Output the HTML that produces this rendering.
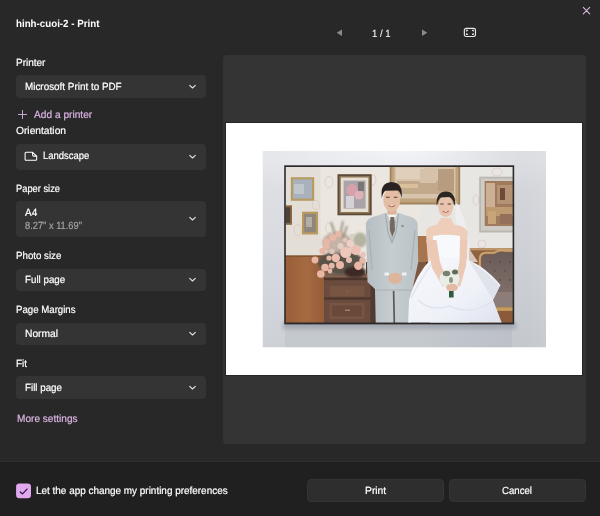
<!DOCTYPE html>
<html><head><meta charset="utf-8"><title>Print</title>
<style>
*{box-sizing:border-box;margin:0;padding:0}
html,body{width:600px;height:516px;overflow:hidden;background:#282828}
body{font-family:"Liberation Sans",sans-serif;font-size:10px;color:#fff;position:relative}
.abs{position:absolute}
.t{position:absolute;white-space:nowrap;line-height:12px;font-size:10.4px;text-rendering:geometricPrecision;-webkit-text-stroke:0.2px currentColor;transform-origin:0 50%;display:inline-block}
.sel{position:absolute;left:16px;width:190px;background:#343434;border-radius:4px}
.preview{left:223px;top:55px;width:363px;height:389px;background:#343434;border-radius:4px}
.page{left:226.4px;top:123.1px;width:355.6px;height:252.1px;background:#fff;box-shadow:0 0 0 0.9px #252525}
.footer{left:0;top:461px;width:600px;height:55px;background:#202020;border-top:1px solid #2f2f2f}
.btn{top:479px;height:23px;background:#2e2e2e;border-radius:4px;border:1px solid #343434}
.cb{left:16.1px;top:483.3px;width:15px;height:15px;border-radius:3.3px;background:#e0a9ee}
.chev{position:absolute;left:187.5px}
</style></head><body>
<svg class="abs" style="left:582px;top:6px" width="9" height="9" viewBox="0 0 9 9"><path d="M1.3 1.4L7.7 7.8M7.7 1.4L1.3 7.8" stroke="#dcb8e5" stroke-width="1.1" fill="none" stroke-linecap="round"/></svg>

<svg class="abs" style="left:336px;top:29px" width="7" height="8" viewBox="0 0 7 8"><path d="M6 0.5L0.7 3.7L6 6.9Z" fill="#8a8a8a"/></svg>
<svg class="abs" style="left:421px;top:29px" width="7" height="8" viewBox="0 0 7 8"><path d="M1 0.5L6.3 3.7L1 6.9Z" fill="#8a8a8a"/></svg>
<svg class="abs" style="left:463px;top:27px" width="14" height="11" viewBox="0 0 14 11"><rect x="1.35" y="1.35" width="11.1" height="8.1" rx="1.7" fill="none" stroke="#e8e8e8" stroke-width="1.15"/><path d="M3.5 4.6V3.4H5M9 3.4H10.3V4.6M10.3 6.2V7.4H9M5 7.4H3.5V6.2" stroke="#dcdcdc" stroke-width="1.1" fill="none"/></svg>


<div class="sel" style="top:75.4px;height:22.2px"></div>
<div class="sel" style="top:143.5px;height:26.5px"></div>
<div class="sel" style="top:200.8px;height:35.8px"></div>
<div class="sel" style="top:268.6px;height:22.6px"></div>
<div class="sel" style="top:322.6px;height:22.6px"></div>
<div class="sel" style="top:376.0px;height:22.8px"></div>
<svg class="chev" style="top:83.9px" width="9" height="6" viewBox="0 0 9 6"><path d="M1.7 1.3L4.5 4L7.3 1.3" stroke="#e0e0e0" stroke-width="1.15" fill="none" stroke-linecap="round" stroke-linejoin="round"/></svg>
<svg class="chev" style="top:154.2px" width="9" height="6" viewBox="0 0 9 6"><path d="M1.7 1.3L4.5 4L7.3 1.3" stroke="#e0e0e0" stroke-width="1.15" fill="none" stroke-linecap="round" stroke-linejoin="round"/></svg>
<svg class="chev" style="top:216.1px" width="9" height="6" viewBox="0 0 9 6"><path d="M1.7 1.3L4.5 4L7.3 1.3" stroke="#e0e0e0" stroke-width="1.15" fill="none" stroke-linecap="round" stroke-linejoin="round"/></svg>
<svg class="chev" style="top:277.4px" width="9" height="6" viewBox="0 0 9 6"><path d="M1.7 1.3L4.5 4L7.3 1.3" stroke="#e0e0e0" stroke-width="1.15" fill="none" stroke-linecap="round" stroke-linejoin="round"/></svg>
<svg class="chev" style="top:331.4px" width="9" height="6" viewBox="0 0 9 6"><path d="M1.7 1.3L4.5 4L7.3 1.3" stroke="#e0e0e0" stroke-width="1.15" fill="none" stroke-linecap="round" stroke-linejoin="round"/></svg>
<svg class="chev" style="top:384.9px" width="9" height="6" viewBox="0 0 9 6"><path d="M1.7 1.3L4.5 4L7.3 1.3" stroke="#e0e0e0" stroke-width="1.15" fill="none" stroke-linecap="round" stroke-linejoin="round"/></svg>
<svg class="abs" style="left:17px;top:109px" width="11" height="11" viewBox="0 0 11 11"><path d="M5.5 1V10M1 5.5H10" stroke="#d9b3e3" stroke-width="0.9" fill="none"/></svg>
<svg class="abs" style="left:24px;top:151px" width="14" height="11" viewBox="0 0 14 11"><path d="M2.2 1.3H8.6L12.7 5.2V8.2Q12.7 9.3 11.6 9.3H2.2Q1.1 9.3 1.1 8.2V2.4Q1.1 1.3 2.2 1.3ZM8.6 1.5V4Q8.6 5.1 9.7 5.1H12.5" stroke="#fff" stroke-width="1.05" fill="none" stroke-linejoin="round"/></svg>

<div class="abs preview"></div>
<div class="abs page"></div>
<svg class="abs" style="left:0;top:0" width="600" height="516" viewBox="0 0 600 516">
<defs>
<linearGradient id="wall" x1="0" y1="0" x2="0" y2="1"><stop offset="0" stop-color="#e0e2e6"/><stop offset="0.45" stop-color="#d9dbe0"/><stop offset="1" stop-color="#cdd1d6"/></linearGradient>
<radialGradient id="wallglow" cx="0.5" cy="0" r="0.7"><stop offset="0" stop-color="#f4f5f8" stop-opacity="0.9"/><stop offset="1" stop-color="#f3f4f7" stop-opacity="0"/></radialGradient>
<linearGradient id="wallr" x1="0" y1="0" x2="1" y2="0"><stop offset="0.55" stop-color="#5a6068" stop-opacity="0"/><stop offset="0.92" stop-color="#5a6068" stop-opacity="0.08"/><stop offset="1" stop-color="#5a6068" stop-opacity="0.05"/></linearGradient>
<linearGradient id="wood" x1="0" y1="0" x2="1" y2="0"><stop offset="0" stop-color="#985e39"/><stop offset="0.5" stop-color="#a56a41"/><stop offset="1" stop-color="#915936"/></linearGradient>
<linearGradient id="skirt" x1="0" y1="0" x2="1" y2="1"><stop offset="0" stop-color="#f7f8fc"/><stop offset="0.6" stop-color="#eff1f8"/><stop offset="1" stop-color="#dde1ed"/></linearGradient>
<linearGradient id="suit" x1="0" y1="0" x2="1" y2="0"><stop offset="0" stop-color="#b5bec3"/><stop offset="0.5" stop-color="#c5cdd0"/><stop offset="1" stop-color="#bac3c7"/></linearGradient>
<linearGradient id="sofa" x1="0" y1="0" x2="0" y2="1"><stop offset="0" stop-color="#6b5b57"/><stop offset="1" stop-color="#857570"/></linearGradient>
<filter id="b1" x="-5%" y="-5%" width="110%" height="110%"><feGaussianBlur stdDeviation="0.55"/></filter>
<filter id="b2" x="-20%" y="-20%" width="140%" height="140%"><feGaussianBlur stdDeviation="1.3"/></filter>
<filter id="b3" x="-20%" y="-50%" width="140%" height="200%"><feGaussianBlur stdDeviation="2.2"/></filter>
<clipPath id="inframe"><rect x="285.8" y="167" width="226.8" height="155.4"/></clipPath>
<clipPath id="inphoto"><rect x="262.5" y="151" width="283.5" height="196.5"/></clipPath>
</defs>
<g clip-path="url(#inphoto)">
<rect x="262.5" y="151" width="283.5" height="196.5" fill="url(#wall)"/>
<rect x="262.5" y="151" width="283.5" height="70" fill="url(#wallglow)"/>
<rect x="262.5" y="151" width="283.5" height="196.5" fill="url(#wallr)"/>
<rect x="285" y="324" width="227" height="24" fill="#4b5264" opacity="0.07"/>
<rect x="283" y="322" width="233" height="7" fill="#a3a7b0" filter="url(#b3)"/>
</g>
<rect x="284.2" y="165.3" width="230" height="159.1" fill="#2b2a2b"/>
<g clip-path="url(#inframe)">
<g filter="url(#b1)">
<!-- wallpaper -->
<rect x="284" y="166" width="232" height="160" fill="#ebe7e0"/>
<rect x="284" y="166" width="36.5" height="92" fill="#e4dfd6"/>
<rect x="420" y="166" width="96" height="90" fill="#e7e6e3"/>
<!-- wall ornaments -->
<g fill="none" stroke="#dcc9c2" stroke-width="0.8">
<ellipse cx="329" cy="182" rx="4" ry="5.5"/><ellipse cx="316" cy="205" rx="3.5" ry="4.5"/><ellipse cx="298" cy="230" rx="4" ry="5.5"/><ellipse cx="329" cy="228" rx="3.5" ry="5"/>
<ellipse cx="373" cy="180" rx="3" ry="5"/><ellipse cx="476" cy="200" rx="3" ry="5"/><ellipse cx="497" cy="172" rx="5" ry="4"/><ellipse cx="482" cy="244" rx="4" ry="4"/>
</g>
<!-- wainscot -->
<rect x="284" y="256" width="45" height="70" fill="url(#wood)"/>
<rect x="284" y="255.3" width="45" height="1.6" fill="#80502f"/>
<!-- wood behind couple -->
<rect x="408" y="236" width="22" height="28" fill="#a7754e"/>
<rect x="366" y="262" width="64" height="64" fill="#4f3a30"/>
<rect x="410" y="262" width="16" height="30" fill="#7b5843"/>
<!-- picture 1 -->
<rect x="290.8" y="177.2" width="23.4" height="23.6" fill="#b79b64"/>
<rect x="293" y="179.4" width="19" height="19.2" fill="#a9b2bc"/>
<rect x="294" y="184" width="10" height="10" fill="#bfc6cc"/>
<!-- picture 4 -->
<rect x="285.5" y="205.3" width="6.5" height="19.5" fill="#8a6a45"/>
<rect x="285.5" y="207.3" width="4.7" height="15.5" fill="#4f4239"/>
<!-- picture 3 -->
<rect x="302" y="211.7" width="16" height="22.8" fill="#b99a5d"/>
<rect x="304.2" y="213.9" width="11.6" height="18.4" fill="#8f877e"/>
<rect x="306" y="217" width="6" height="10" fill="#b5aea4"/>
<!-- picture 2 -->
<rect x="337.5" y="174.2" width="34.2" height="41.1" fill="#5d4b38"/>
<rect x="339.3" y="176" width="30.6" height="37.5" fill="#8b7454"/>
<rect x="340.8" y="177.5" width="27.6" height="34.5" fill="#e6dfd3"/>
<rect x="343.6" y="180.6" width="22" height="28" fill="#aaa4a8"/>
<ellipse cx="352" cy="190" rx="5.5" ry="6" fill="#d8a0ab"/>
<ellipse cx="359" cy="195" rx="4.5" ry="4.5" fill="#e0b0b8"/>
<rect x="346" y="196" width="8" height="12" fill="#d4d2d4"/>
<rect x="358" y="182" width="6" height="9" fill="#7b7478"/>
<!-- big painting -->
<rect x="389.7" y="166" width="70.5" height="38.5" fill="#a2845d"/>
<rect x="391.5" y="166" width="67" height="36.5" fill="#bfa37c"/>
<rect x="394.5" y="166" width="61" height="32.5" fill="#d6c4ad"/>
<rect x="396" y="168" width="28" height="11" fill="#e0cfba"/>
<rect x="397" y="181" width="57" height="13" fill="#c2a98c"/>
<rect x="420" y="169" width="16" height="14" fill="#d6c2aa"/>
<rect x="438" y="169" width="16" height="22" fill="#b89c80"/>
<rect x="400" y="184" width="18" height="4" fill="#d9bf9a"/>
<!-- right painting -->
<rect x="479.2" y="176.7" width="36" height="55.8" fill="#bbb7b0"/>
<rect x="481" y="178.5" width="34" height="52" fill="#cfccc6"/>
<rect x="484.7" y="181" width="30" height="45" fill="#a07a5c"/>
<rect x="486" y="183" width="9" height="24" fill="#ccb096"/>
<rect x="497" y="185" width="16" height="19" fill="#b59273"/>
<rect x="500" y="188" width="5" height="12" fill="#6e4c38"/>
<rect x="486" y="207" width="27" height="9" fill="#bf9a70"/>
<rect x="488" y="211" width="8" height="13" fill="#c9a478"/>
<rect x="500" y="214" width="12" height="10" fill="#94705a"/>
<!-- sofa -->
<rect x="469" y="248.3" width="47" height="80" fill="#8f6240"/>
<rect x="469" y="248.3" width="47" height="2" fill="#c09767"/>
<path d="M481.5 259 Q481.5 254.5 486 254.5 L494 254.5 Q500 250.5 506 252.5 L516 252.5 L516 307 L481.5 307Z" fill="url(#sofa)"/>
<path d="M479.8 307 L479.8 259 Q479.8 253 486 252.8 L494 252.8 Q500 248.8 506 250.8 L516 250.8" stroke="#c8a672" stroke-width="2" fill="none"/>
<g fill="#5b4d4a"><circle cx="490" cy="262" r="0.9"/><circle cx="500" cy="262" r="0.9"/><circle cx="510" cy="262" r="0.9"/><circle cx="495" cy="271" r="0.9"/><circle cx="505" cy="271" r="0.9"/><circle cx="500" cy="280" r="0.9"/><circle cx="510" cy="280" r="0.9"/></g>
<rect x="481" y="292" width="35" height="15" fill="#8c7d78"/>
<rect x="476" y="307.3" width="40" height="3.6" fill="#c39c5e"/>
<rect x="476" y="311" width="40" height="15" fill="#8a5a3a"/>
<!-- cabinet -->
<rect x="324" y="274" width="46.5" height="52" fill="#6a4b3d"/>
<rect x="323" y="273.5" width="48" height="4.2" fill="#86655320"/>
<rect x="323" y="273.5" width="48" height="4.2" fill="#846352"/>
<rect x="324" y="277.7" width="46.5" height="2.5" fill="#4d352b"/>
<rect x="329.5" y="286" width="35" height="10.5" fill="#775543"/>
<rect x="324" y="297.3" width="46.5" height="2.4" fill="#4f372c"/>
<rect x="329.5" y="303" width="35" height="16" fill="#775543"/>
<rect x="332" y="305.5" width="30" height="11" fill="#6a4a3b"/>
<rect x="345" y="309.5" width="5" height="1.5" fill="#a08063"/>
<rect x="346" y="290" width="2" height="2" fill="#8d5a4a"/>
</g>
<!-- flowers -->
<g filter="url(#b2)">
<ellipse cx="341" cy="263" rx="23" ry="12" fill="#5a5246"/>
<ellipse cx="337" cy="243" rx="15" ry="11" fill="#b9a597" opacity="0.8"/>
<ellipse cx="355" cy="272" rx="11" ry="5.5" fill="#3e2c27"/>
<ellipse cx="360" cy="240" rx="7" ry="7.5" fill="#b4b3a0"/>
<path d="M331 222 L336 236 M343 221 L340 236 M347 226 L343 238" stroke="#8d8673" stroke-width="1.6" fill="none"/>
</g>
<g filter="url(#b1)" fill="#e8b7a6">
<circle cx="333" cy="237.5" r="3.6"/><circle cx="338.5" cy="234" r="3.2"/><circle cx="326.7" cy="241.7" r="3.2"/><circle cx="350" cy="243.5" r="3.4" fill="#efd0c6"/>
<circle cx="326.5" cy="246.5" r="3.2"/><circle cx="322.5" cy="251" r="3.2"/><circle cx="345.8" cy="252.5" r="5.6" fill="#eec6ba"/>
<circle cx="355.8" cy="250" r="5" fill="#ebc0b3"/><circle cx="335.8" cy="258" r="4.2" fill="#ebbfae"/><circle cx="315" cy="260" r="3.4"/>
<circle cx="325" cy="267.5" r="3.8"/><circle cx="331.7" cy="265.8" r="3"/><circle cx="340" cy="265" r="4"/><circle cx="358.3" cy="265.8" r="4.2"/>
<circle cx="362.5" cy="260.5" r="3.2"/><circle cx="320.8" cy="274" r="3.8"/><circle cx="330" cy="271" r="2.4"/><circle cx="363" cy="254.5" r="2.8" fill="#e7c3b8"/>
<circle cx="340.5" cy="246" r="3" fill="#e3cfc6"/><circle cx="332" cy="251.5" r="2.8" fill="#dcc5bb"/><circle cx="349" cy="260" r="3" fill="#e6bfb2"/><circle cx="329" cy="258" r="2.6"/>
<circle cx="352" cy="236" r="2.4" fill="#d9cfc0"/><circle cx="345" cy="240" r="2.2" fill="#e6c4b9"/>
</g>
<!-- groom -->
<g filter="url(#b1)">
<path d="M365.8 223 Q367 217.5 378 215.5 L386 212.5 L398 212.5 L406 215.5 Q416.5 217.5 417.6 223 L418.2 262 L412.5 289 L411 326 L375.8 326 L375 289 L367.5 282 Z" fill="url(#suit)"/>
<path d="M375.5 290 L412 290" stroke="#abb0b4" stroke-width="1" fill="none"/>
<path d="M393.6 291 L394.4 326" stroke="#5d5855" stroke-width="1.7" fill="none"/>
<path d="M386.5 212.5 L392 224 L397.5 212.5Z" fill="#f3f3f3"/>
<path d="M388.5 221 L392 241 L396 221Z" fill="#adb2b6"/>
<path d="M390.4 217 L394.2 217 L395 230 L392.4 236.5 L389.8 230Z" fill="#75675f"/>
<path d="M385.5 214 L388 232 L392 243 M398.5 214 L396 232 L392 243" stroke="#a2a7ab" stroke-width="1.1" fill="none"/>
<path d="M369 230 L372 270 M415 230 L411 270" stroke="#abb0b4" stroke-width="1.2" fill="none"/>
<rect x="387.5" y="208" width="9" height="6.5" fill="#dcb29a"/>
<ellipse cx="391.7" cy="200" rx="8.5" ry="11.8" fill="#e4bda5"/>
<path d="M381.8 198 Q379.6 182.6 391.5 182 Q403.4 182.6 401.6 198 Q400.6 192 398 190.4 L385.5 190.8 Q383 192 381.8 198Z" fill="#2a2422"/>
<path d="M386 197.3 h3.6 M393.8 197.3 h3.6" stroke="#4b3a33" stroke-width="1.1"/>
<path d="M388.3 205.6 Q391.7 208 395.1 205.6" stroke="#a8604f" stroke-width="1" fill="#f4ece8"/>
<ellipse cx="395" cy="278.3" rx="7" ry="5.6" fill="#ddb49c"/>
<rect x="384.5" y="272.5" width="4.5" height="3" fill="#f0f0f0"/><rect x="402" y="272.5" width="4.5" height="3" fill="#f0f0f0"/>
<circle cx="402.5" cy="226" r="1.2" fill="#8b8b7e"/>
</g>
<!-- bride -->
<g filter="url(#b1)">
<path d="M455 200 Q466 215 470 250 L478 262 L462 262 L456 225Z" fill="#f2f2f3" opacity="0.7"/>
<path d="M425.8 231 Q428 225.5 437 224.8 L441 218 L450.5 218 L454 224.8 Q465 225.5 467.6 232 L467 262 L460 286 L438 286 L428 262Z" fill="#eecdbb"/>
<path d="M433 236 Q446.5 233.3 460 236 L461 262 L432 262Z" fill="#f8f9fc"/>
<path d="M432 258 L461 258 Q481 262 500.5 285 L493 300 L503 326 L408 326 L409 300 Q415 275 432 258Z" fill="url(#skirt)"/>
<path d="M469 261 Q490 274 499.5 286 L492.5 300 Q484 284 469 261Z" fill="#e1e3ea"/>
<path d="M418 300 Q430 312 450 306 Q470 316 492 302" stroke="#dfe3ee" stroke-width="1.4" fill="none"/>
<path d="M411 298 Q420 280 433 262" stroke="#e3e6ef" stroke-width="1.5" fill="none"/>
<path d="M426.2 240 L436.5 240 L440 262 L448 283 L443 287 L432 268Z" fill="#ecc9b5"/>
<path d="M467.4 240 L460 240 L459.5 262 L455 283 L460 287 L466 266Z" fill="#ecc9b5"/>
<ellipse cx="445.7" cy="206.3" rx="7.5" ry="10.8" fill="#e8c3ae"/>
<path d="M436.8 206 Q435.3 192 446 191.5 Q456.3 192 455 206 Q453 198 449 197 L441 197.4 Q438 199.5 436.8 206Z" fill="#2b2523"/>
<path d="M440.3 204 h3.3 M447.6 204 h3.3" stroke="#4b3a33" stroke-width="1"/>
<path d="M442.6 211.3 Q445.7 213.6 448.8 211.3" stroke="#b05f58" stroke-width="1" fill="#f4ece8"/>
<ellipse cx="449.5" cy="278.5" rx="10" ry="9.2" fill="#e9ede6"/>
<ellipse cx="446.5" cy="273.5" rx="3.8" ry="2.8" fill="#75826f"/><ellipse cx="455" cy="272" rx="3" ry="2.5" fill="#5e6c58"/><ellipse cx="451" cy="280" rx="2" ry="3" fill="#8b9784"/>
<ellipse cx="452" cy="287.5" rx="6" ry="3.8" fill="#e3baa5"/>
<rect x="449" y="291" width="4.6" height="6.5" fill="#2f5a40"/>
</g>
</g>
</svg>


<div class="abs footer"></div>
<svg class="abs" style="left:15px;top:482px" width="18" height="18" viewBox="0 0 18 18"><rect x="1.1" y="1.6" width="14.9" height="14.7" rx="3.3" fill="#e0a9ee"/><path d="M5.3 9.9L7.5 11.9L12 7.1" stroke="#351a40" stroke-width="1.35" fill="none" stroke-linecap="round" stroke-linejoin="round"/></svg>
<div class="abs btn" style="left:306.5px;width:137px"></div>
<div class="abs btn" style="left:449px;width:137px"></div>
<span class="t" style="left:16.2px;top:18.90px;transform:scaleX(0.938);font-weight:bold;-webkit-text-stroke:0;">hinh-cuoi-2 - Print</span>
<span class="t" style="left:16.2px;top:57.50px;transform:scaleX(0.960);">Printer</span>
<span class="t" style="left:24.6px;top:81.90px;transform:scaleX(0.951);">Microsoft Print to PDF</span>
<span class="t" style="left:34.0px;top:109.90px;transform:scaleX(0.978);color:#d9b3e3;">Add a printer</span>
<span class="t" style="left:16.2px;top:125.50px;transform:scaleX(0.984);">Orientation</span>
<span class="t" style="left:43.0px;top:150.90px;transform:scaleX(0.909);">Landscape</span>
<span class="t" style="left:16.2px;top:183.90px;transform:scaleX(0.896);">Paper size</span>
<span class="t" style="left:24.6px;top:207.90px;transform:scaleX(0.959);">A4</span>
<span class="t" style="left:24.6px;top:221.10px;transform:scaleX(0.893);color:#a3a3a3;">8.27&quot; x 11.69&quot;</span>
<span class="t" style="left:16.2px;top:250.90px;transform:scaleX(0.935);">Photo size</span>
<span class="t" style="left:24.6px;top:274.90px;transform:scaleX(0.940);">Full page</span>
<span class="t" style="left:16.2px;top:304.50px;transform:scaleX(0.929);">Page Margins</span>
<span class="t" style="left:24.6px;top:329.10px;transform:scaleX(0.985);">Normal</span>
<span class="t" style="left:16.2px;top:358.50px;transform:scaleX(0.953);">Fit</span>
<span class="t" style="left:24.6px;top:382.90px;transform:scaleX(0.942);">Fill page</span>
<span class="t" style="left:17.0px;top:413.90px;transform:scaleX(0.972);color:#d9b3e3;">More settings</span>
<span class="t" style="left:36.2px;top:485.90px;transform:scaleX(0.956);">Let the app change my printing preferences</span>
<span class="t" style="left:364.6px;top:486.10px;transform:scaleX(0.992);">Print</span>
<span class="t" style="left:502.2px;top:486.10px;transform:scaleX(0.927);">Cancel</span>
<span class="t" style="left:372.3px;top:28.50px;transform:scaleX(0.925);-webkit-text-stroke:0.05px;">1 / 1</span>
</body></html>
